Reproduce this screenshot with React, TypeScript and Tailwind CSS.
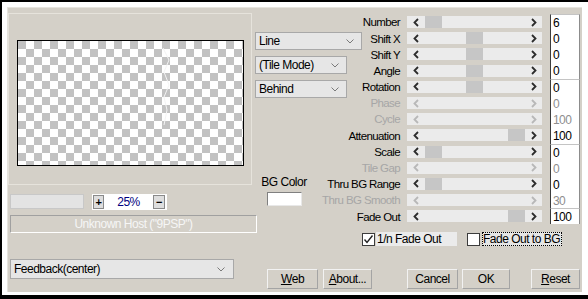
import React from "react";

type Row = { label: string; value: string; thumb?: number; disabled?: boolean };

const rows: Row[] = [
  { label: "Number", value: "6", thumb: 18 },
  { label: "Shift X", value: "0", thumb: 59 },
  { label: "Shift Y", value: "0", thumb: 59 },
  { label: "Angle", value: "0", thumb: 59 },
  { label: "Rotation", value: "0", thumb: 59 },
  { label: "Phase", value: "0", disabled: true },
  { label: "Cycle", value: "100", disabled: true },
  { label: "Attenuation", value: "100", thumb: 101 },
  { label: "Scale", value: "0", thumb: 18 },
  { label: "Tile Gap", value: "0", disabled: true },
  { label: "Thru BG Range", value: "0", thumb: 18 },
  { label: "Thru BG Smooth", value: "30", disabled: true },
  { label: "Fade Out", value: "100", thumb: 101 },
];

// full class names so tailwind picks them up
const rowStart = [
  "row-start-1",
  "row-start-2",
  "row-start-3",
  "row-start-4",
  "row-start-5",
  "row-start-6",
  "row-start-7",
  "row-start-8",
  "row-start-9",
  "row-start-10",
  "row-start-11",
  "row-start-12",
  "row-start-13",
];

const groups = [
  { from: 0, to: 4, place: "row-start-1 row-span-4" },
  { from: 4, to: 8, place: "row-start-5 row-span-4" },
  { from: 8, to: 12, place: "row-start-9 row-span-4" },
  { from: 12, to: 13, place: "row-start-13 row-span-1" },
];

const Arrow = ({ dir, disabled }: { dir: "left" | "right"; disabled?: boolean }) => (
  <svg width="6" height="9" viewBox="0 0 6 9" className="relative shrink-0">
    <polyline
      points={dir === "left" ? "5,1 1.5,4.5 5,8" : "1,1 4.5,4.5 1,8"}
      fill="none"
      stroke={disabled ? "#b8b8b8" : "#2c2c2c"}
      strokeWidth="1.8"
    />
  </svg>
);

const Slider = ({ thumb, disabled }: { thumb?: number; disabled?: boolean }) => (
  <div className="relative h-[12px] bg-[#ebebeb] flex items-center justify-between pl-[6px] pr-[5px]">
    {thumb !== undefined && !disabled && (
      <div className="absolute top-0 h-full w-[17px] bg-[#c6c6c6]" style={{ left: thumb }} />
    )}
    <Arrow dir="left" disabled={disabled} />
    <Arrow dir="right" disabled={disabled} />
  </div>
);

const DownArrow = () => (
  <svg width="8" height="5" viewBox="0 0 8 5" className="shrink-0">
    <polyline points="0.5,0.5 4,4 7.5,0.5" fill="none" stroke="#7a7a7a" strokeWidth="1" />
  </svg>
);

const Select = ({ label, className }: { label: string; className: string }) => (
  <div
    className={`flex items-center justify-between bg-[#e6e6e6] border border-[#a8a8a8] pl-[3px] pr-[7px] leading-none ${className}`}
  >
    <span>{label}</span>
    <DownArrow />
  </div>
);

const Check = ({ checked }: { checked?: boolean }) => (
  <div className="w-[13px] h-[13px] bg-white border border-[#3c3c3c] flex items-center justify-center shrink-0">
    {checked && (
      <svg width="11" height="11" viewBox="0 0 11 11">
        <polyline points="1.5,5.5 4,8.5 9.5,1.5" fill="none" stroke="#222" strokeWidth="1.4" />
      </svg>
    )}
  </div>
);

const Button = ({ children, className }: { children: React.ReactNode; className: string }) => (
  <button
    className={`h-[20px] flex items-center justify-center bg-[#d4d0c8] border border-t-[#f2f2f2] border-l-[#f2f2f2] border-b-[#a4a4a4] border-r-[#a4a4a4] leading-none ${className}`}
  >
    {children}
  </button>
);

export default function App() {
  return (
    <div className="w-[588px] h-[299px] bg-white border-t-2 border-l-2 border-b-4 border-black pt-[5px] pl-[5px] pr-[6px] pb-[3px] font-['Liberation_Sans',Arial,sans-serif] text-[12px] tracking-[-0.5px] text-black">
      <div className="h-full bg-[#d4d0c8] border-t border-l border-[#e6e4de] flex">
        {/* Left: preview and host info */}
        <div className="w-[247px] shrink-0 flex flex-col">
          <div className="mt-[5px] w-[244px] h-[172px] border border-[#e6e3dc]">
            <div className="relative ml-[8px] mt-[26px] w-[227px] h-[126px] border border-black bg-[conic-gradient(#fff_25%,#c2c2c2_0_50%,#fff_0_75%,#c2c2c2_0)] bg-[length:16px_16px]">
              <svg className="absolute inset-0 w-full h-full">
                <polyline
                  points="145,7 151,19 146,31 151,44 146,56 149,69 146,84"
                  fill="none"
                  stroke="#f4f4f4"
                  strokeWidth="1"
                />
              </svg>
            </div>
          </div>

          <div className="mt-[9px] h-[16px] flex items-start">
            <div className="ml-[2px] w-[74px] h-[15px] bg-[#e3e3e3] border border-[#c8c8c8]" />
            <div className="ml-[8px] w-[75px] h-[16px] bg-white flex items-center">
              <div className="ml-[1px] w-[11px] h-[14px] bg-[#dedede] border border-[#8a8a8a] flex items-center justify-center text-[11px] font-bold leading-none">
                +
              </div>
              <span className="flex-1 text-center text-[#000080] leading-none">25%</span>
              <div className="mr-[2px] w-[12px] h-[14px] bg-[#dedede] border border-[#8a8a8a] flex items-center justify-center text-[11px] font-bold leading-none">
                −
              </div>
            </div>
          </div>

          <div className="mt-[5px] ml-[2px] w-[247px] h-[18px] shrink-0 border border-t-[#a0a0a0] border-l-[#a0a0a0] border-b-white border-r-white flex items-center justify-center text-[#f6f6f6] leading-none">
            Unknown Host ("9PSP")
          </div>

          <Select label="Feedback(center)" className="mt-[26px] ml-[2px] w-[224px] h-[20px] shrink-0 pl-[2px] pr-[8px]" />
        </div>

        {/* Right: parameters */}
        <div className="flex-1 flex flex-col text-[11.5px] tracking-[-0.6px]">
          <div className="mt-[6px] grid grid-cols-[50px_57px_38px_7px_135px_8px_30px] grid-rows-[repeat(13,16.2px)]">
            {rows.map((r, i) => (
              <React.Fragment key={r.label}>
                <div
                  className={`col-start-1 col-span-3 self-center pt-[2px] text-right leading-none whitespace-nowrap ${rowStart[i]} ${
                    r.disabled ? "text-[#a6a6a6]" : "text-black"
                  }`}
                >
                  {r.label}
                </div>
                <div className={`col-start-5 self-center ${rowStart[i]}`}>
                  <Slider thumb={r.thumb} disabled={r.disabled} />
                </div>
              </React.Fragment>
            ))}

            {groups.map((g) => (
              <div
                key={g.place}
                className={`col-start-7 ${g.place} bg-white border-t border-t-[#c4c4c4] border-l border-l-[#3c3c3c] border-r border-r-[#8c8c8c] flex flex-col text-[12px]`}
              >
                {rows.slice(g.from, g.to).map((r) => (
                  <div
                    key={r.label}
                    className={`flex-1 flex items-center pl-[2px] pt-[1px] leading-none ${
                      r.disabled ? "text-[#8e8e8e]" : "text-black"
                    }`}
                  >
                    {r.value}
                  </div>
                ))}
              </div>
            ))}

            <div className="col-start-1 col-span-2 row-start-2 row-span-5 self-start mt-[2px] flex flex-col gap-[6px] text-[12px] tracking-[-0.5px]">
              <Select label="Line" className="w-[107px] h-[18px]" />
              <Select label="(Tile Mode)" className="w-[92px] h-[18px]" />
              <Select label="Behind" className="w-[92px] h-[18px]" />
            </div>

            <div className="col-start-1 row-start-10 row-span-3 self-start mt-[16px] ml-[8px] w-[42px] flex flex-col items-center text-[12px] tracking-[-0.5px]">
              <span className="leading-[12px] whitespace-nowrap">BG Color</span>
              <div className="mt-[4px] w-[35px] h-[14px] bg-white border border-t-[#808080] border-l-[#808080] border-b-[#e8e8e8] border-r-[#e8e8e8]" />
            </div>
          </div>

          <div className="mt-[8px] h-[14px] flex items-center text-[12px] tracking-[-0.5px]">
            <div className="ml-[107px]">
              <Check checked />
            </div>
            <div className="ml-[1px] w-[81px] h-[14px] bg-[#ebebeb] pl-[1px] flex items-center leading-none">
              1/n Fade Out
            </div>
            <div className="ml-[10px]">
              <Check />
            </div>
            <div className="ml-[2px] w-[80px] h-[14px] bg-[#e6e6e6] border border-dotted border-black flex items-center leading-none">
              Fade Out to BG
            </div>
          </div>

          <div className="mt-[23px] flex text-[12px] tracking-[-0.5px]">
            <Button className="ml-[12px] w-[51px]">
              <span className="underline">W</span>eb
            </Button>
            <Button className="ml-[5px] w-[49px]">
              <span className="underline">A</span>bout...
            </Button>
            <Button className="ml-[35px] w-[51px]">Cancel</Button>
            <Button className="ml-[4px] w-[48px]">OK</Button>
            <Button className="ml-[21px] w-[49px]">
              <span className="underline">R</span>eset
            </Button>
          </div>
        </div>
      </div>
    </div>
  );
}
